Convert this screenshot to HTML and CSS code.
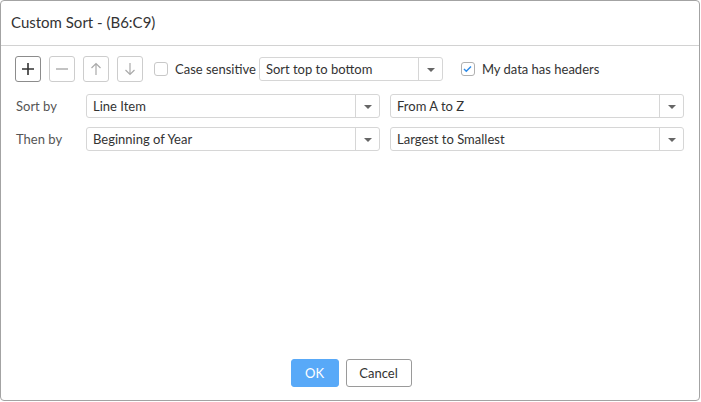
FILE: index.html
```html
<!DOCTYPE html>
<html>
<head>
<meta charset="utf-8">
<link rel="stylesheet" href="styles.css">
</head>
<body>
<div class="dialog">
  <div class="header">Custom Sort - (B6:C9)</div>
  <div class="content">
    <div class="toolbar">
      <button class="tbtn active"><svg width="14" height="14" viewBox="0 0 14 14"><path d="M7 1v12M1 7h12" stroke="#333" stroke-width="1.6"/></svg></button>
      <button class="tbtn"><svg width="14" height="14" viewBox="0 0 14 14"><path d="M1 7h12" stroke="#aaa" stroke-width="1.4"/></svg></button>
      <button class="tbtn"><svg width="12" height="14" viewBox="0 0 12 14"><path d="M6 13V1.5M1.5 6L6 1.5 10.5 6" stroke="#aaa" stroke-width="1.2" fill="none"/></svg></button>
      <button class="tbtn"><svg width="12" height="14" viewBox="0 0 12 14"><path d="M6 1v11.5M1.5 8L6 12.5 10.5 8" stroke="#aaa" stroke-width="1.2" fill="none"/></svg></button>
      <label class="check"><span class="box"></span>Case sensitive</label>
      <div class="select small"><span class="val">Sort top to bottom</span><span class="arrow"></span></div>
      <label class="check headers"><span class="box checked"><svg width="9" height="8" viewBox="0 0 9 8"><path d="M1 4l2.3 2.3L8 1.5" stroke="#2b8ae8" stroke-width="1.4" fill="none"/></svg></span>My data has headers</label>
    </div>
    <div class="rows">
      <div class="row">
        <span class="lbl">Sort by</span>
        <div class="select"><span class="val">Line Item</span><span class="arrow"></span></div>
        <div class="select"><span class="val">From A to Z</span><span class="arrow"></span></div>
      </div>
      <div class="row">
        <span class="lbl">Then by</span>
        <div class="select"><span class="val">Beginning of Year</span><span class="arrow"></span></div>
        <div class="select"><span class="val">Largest to Smallest</span><span class="arrow"></span></div>
      </div>
    </div>
  </div>
  <div class="footer">
    <button class="btn ok">OK</button>
    <button class="btn cancel">Cancel</button>
  </div>
</div>
</body>
</html>
```
FILE: styles.css
```css
* { box-sizing: border-box; }
html, body { margin: 0; padding: 0; background: #fff; }
body { font-family: Lato, "Open Sans", sans-serif; color: #333; font-size: 13px; }
.dialog {
  width: 700px;
  height: 401px;
  border: 1px solid #a3a3a3;
  border-radius: 4px;
  display: flex;
  flex-direction: column;
  background: #fff;
}
.header {
  height: 45px;
  border-bottom: 1px solid #d2d2d2;
  padding: 0 0 2px 10px;
  display: flex;
  align-items: center;
  font-size: 15px;
  color: #333;
}
.content { flex: 1; padding: 10px 14px 0 14px; }
.toolbar { display: flex; align-items: center; height: 26px; }
.tbtn {
  width: 26px; height: 26px;
  border: 1px solid #cdcdcd;
  border-radius: 3px;
  background: #fff;
  padding: 0;
  margin-right: 8px;
  display: flex; align-items: center; justify-content: center;
  flex-shrink: 0;
}
.tbtn.active { border-color: #8c8c8c; }
.check { display: flex; align-items: center; color: #333; font-size: 13px; margin-left: 3px; }
.box {
  width: 14px; height: 14px;
  border: 1px solid #c8c8c8;
  border-radius: 3px;
  margin-right: 7px;
  display: flex; align-items: center; justify-content: center;
}
.box.checked { border-color: #b0b0b0; }
.headers { margin-left: 18px; }
.select {
  height: 24px;
  border: 1px solid #d6d6d6;
  border-radius: 3px;
  display: flex;
  align-items: center;
  background: #fff;
  flex-shrink: 0;
}
.select .val { flex: 1; padding-left: 6px; white-space: nowrap; overflow: hidden; color: #333; }
.select .arrow {
  width: 24px; height: 100%;
  border-left: 1px solid #d6d6d6;
  position: relative;
}
.select .arrow::after {
  content: "";
  position: absolute;
  left: 8px; top: 10px;
  border-left: 4px solid transparent;
  border-right: 4px solid transparent;
  border-top: 4px solid #666;
}
.select.small { width: 184px; margin-left: 3px; }
.rows { margin-top: 12px; display: flex; flex-direction: column; gap: 9px; }
.row { display: flex; align-items: center; gap: 10px; }
.lbl { width: 61px; padding-left: 1px; color: #555; flex-shrink: 0; }
.row .select { width: 294px; }
.footer { display: flex; justify-content: center; gap: 7px; padding: 0 0 13px 0; margin-left: 2px; }
.btn {
  height: 28px;
  border-radius: 3px;
  font-family: Lato, "Open Sans", sans-serif;
  font-size: 13px;
  padding: 0;
}
.ok { width: 48px; background: #58a9f8; border: 1px solid #58a9f8; color: #fff; }
.cancel { width: 66px; background: #fff; border: 1px solid #9a9a9a; color: #333; }
```
